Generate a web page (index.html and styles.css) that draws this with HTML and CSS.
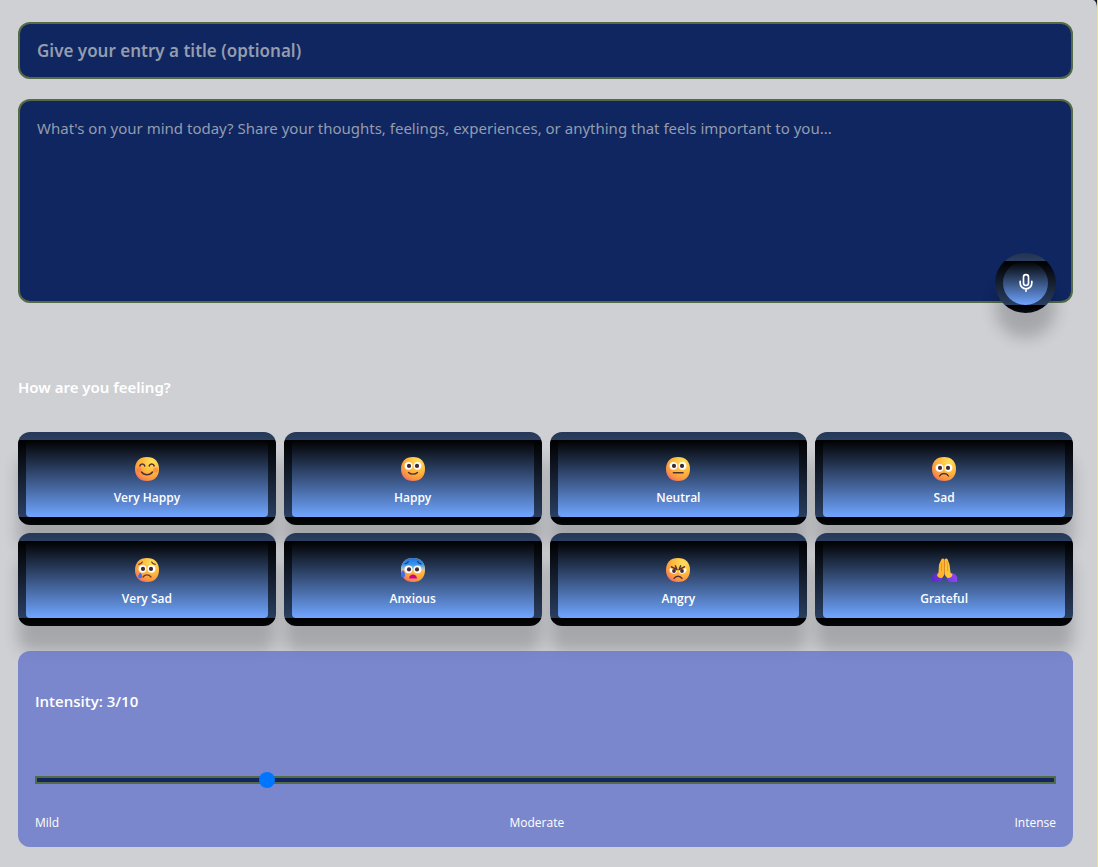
FILE: index.html
```html
<!DOCTYPE html>
<html lang="en">
<head>
<meta charset="utf-8">
<meta name="viewport" content="width=device-width, initial-scale=1">
<title>Journal entry</title>
<link rel="stylesheet" href="styles.css">
</head>
<body>
<svg class="defs" aria-hidden="true">
  <defs>
    <radialGradient id="skin" cx="0.72" cy="0.2" r="0.95">
      <stop offset="0" stop-color="#ffe05a"/><stop offset="0.5" stop-color="#ffb53c"/><stop offset="0.78" stop-color="#fb9440"/><stop offset="1" stop-color="#e8607c"/>
    </radialGradient>
    <linearGradient id="cold" x1="0" y1="0" x2="0" y2="1">
      <stop offset="0" stop-color="#1d72e0"/><stop offset="0.28" stop-color="#3a97ee"/><stop offset="0.48" stop-color="#a9c8e8" stop-opacity="0.8"/><stop offset="0.6" stop-color="#ffc63c" stop-opacity="0"/>
    </linearGradient>
    <linearGradient id="sleeve" x1="0" y1="0" x2="1" y2="0">
      <stop offset="0" stop-color="#5a2bc4"/><stop offset="1" stop-color="#8d45f5"/>
    </linearGradient>
    <symbol id="face" viewBox="0 0 24 24"><path fill="url(#skin)" d="M12 0C19.6 0 24 4.600 24 12s-4.400 12-12 12S0 19.400 0 12 4.400 0 12 0Z"/></symbol>
    <symbol id="eyes" viewBox="0 0 24 24">
      <circle cx="7.500" cy="8.800" r="3.900" fill="#fff"/><circle cx="16.500" cy="8.800" r="3.900" fill="#fff"/>
      <circle cx="8" cy="8.900" r="2.100" fill="#402a32"/><circle cx="16" cy="8.900" r="2.100" fill="#402a32"/>
    </symbol>
  </defs>
</svg>
<main class="page">
  <form class="entry">
    <input class="field title" type="text" aria-label="Entry title" placeholder="Give your entry a title (optional)">
    <div class="note">
      <textarea class="field body" aria-label="Entry text" placeholder="What's on your mind today? Share your thoughts, feelings, experiences, or anything that feels important to you..."></textarea>
      <button class="raised mic" type="button" aria-label="Record voice">
        <svg viewBox="0 0 24 24" fill="none" stroke="#fff" stroke-width="2" stroke-linecap="round" stroke-linejoin="round"><path d="M12 2a3 3 0 0 0-3 3v7a3 3 0 0 0 6 0V5a3 3 0 0 0-3-3Z"/><path d="M19 10v2a7 7 0 0 1-14 0v-2M12 19v3"/></svg>
      </button>
    </div>
    <h2 class="heading">How are you feeling?</h2>
    <div class="moods">
      <button class="raised mood" type="button">
        <svg class="emoji" viewBox="0 0 24 24"><use href="#face"/><circle cx="4" cy="13" r="2.500" fill="#ff6450" opacity=".5"/><circle cx="20.500" cy="13" r="2.500" fill="#ff6450" opacity=".5"/><g fill="none" stroke="#4d303b" stroke-width="1.500" stroke-linecap="round"><path d="M4.800 9c.5-2.600 4.400-2.600 5 0M14.200 9c.5-2.600 4.400-2.600 5 0M6.500 15c2.500 3.500 8.500 3.500 11 0"/></g></svg>
        <span>Very Happy</span>
      </button>
      <button class="raised mood" type="button">
        <svg class="emoji" viewBox="0 0 24 24"><use href="#face"/><use href="#eyes"/><path d="M7.500 15.500c2.300 2.200 6.700 2.200 9 0" fill="none" stroke="#4d303b" stroke-width="1.400" stroke-linecap="round"/></svg>
        <span>Happy</span>
      </button>
      <button class="raised mood" type="button">
        <svg class="emoji" viewBox="0 0 24 24"><use href="#face"/><use href="#eyes"/><path d="M7.500 15.800h9.500" fill="none" stroke="#4d303b" stroke-width="1.600" stroke-linecap="round"/></svg>
        <span>Neutral</span>
      </button>
      <button class="raised mood" type="button">
        <svg class="emoji" viewBox="0 0 24 24"><use href="#face"/><use href="#eyes" y="2"/><path d="M7.500 19c2-3.300 7-3.300 9 0" fill="none" stroke="#4d303b" stroke-width="1.400" stroke-linecap="round"/></svg>
        <span>Sad</span>
      </button>
      <button class="raised mood" type="button">
        <svg class="emoji" viewBox="0 0 24 24"><use href="#face"/><use href="#eyes" y="2"/><g fill="none" stroke="#6b4038" stroke-width="1.300" stroke-linecap="round"><path d="M3.800 6.300c1.800-.3 2.900-1 3.500-2.300M20.200 6.300c-1.800-.3-2.900-1-3.500-2.300M8 19c2-2.800 6-2.800 8 0"/></g><path d="M5.300 14.500c2.700 3.200 1.800 6-.3 6s-3-2.800.3-6Z" fill="#416cf2"/></svg>
        <span>Very Sad</span>
      </button>
      <button class="raised mood" type="button">
        <svg class="emoji" viewBox="0 0 24 24"><use href="#face"/><path fill="url(#cold)" d="M12 0C19.600 0 24 4.600 24 12s-4.400 12-12 12S0 19.400 0 12 4.400 0 12 0Z"/><use href="#eyes" y="2.500"/><path d="M4 5.800c1.800-.2 2.800-.9 3.400-2.200M20 5.800c-1.800-.2-2.800-.9-3.400-2.200" fill="none" stroke="#243c78" stroke-width="1.300" stroke-linecap="round"/><path d="M8 20.500c.3-5.200 7.700-5.200 8 0Z" fill="#d00097"/><path d="M2 12c3 3.500 2.500 7.500 0 7.500S-1 15.500 2 12Z" fill="#416cf2"/></svg>
        <span>Anxious</span>
      </button>
      <button class="raised mood" type="button">
        <svg class="emoji" viewBox="0 0 24 24"><use href="#face"/><path d="M4 10 11.300 13.200a3.900 3.900 0 1 1-7.300-3.200ZM20 10 12.700 13.200a3.900 3.900 0 1 0 7.300-3.200Z" fill="#fff"/><circle cx="8" cy="13" r="1.900" fill="#402a32"/><circle cx="16" cy="13" r="1.900" fill="#402a32"/><g fill="none" stroke="#4d303b" stroke-width="1.400" stroke-linecap="round"><path d="M5.500 8.800 11 11.500M18.500 8.800 13 11.500M9.300 7.800l1.200 2.500M14.700 7.800l-1.200 2.500M8 20.500c1.800-3 6.200-3 8 0"/></g></svg>
        <span>Angry</span>
      </button>
      <button class="raised mood" type="button">
        <svg class="emoji" viewBox="0 0 24 24"><path d="M0 19c1-2.500 3.500-4 6-4l4.500 5.500L8.500 24H0ZM25 19c-1-2.500-3.500-4-6-4l-4.500 5.500 2.500 3.500h8Z" fill="url(#sleeve)"/><path d="M12.400 1.500C11.500-.3 9.400.4 9 2.200L7 6.500l-.5 8L5 17c.5 2 2.500 3.500 4.800 3 1.700-1.200 2.600-3 2.600-5Z" fill="#ffb52e"/><path d="M12.600 1.500c.9-1.800 3-1.100 3.400.7l1.500 4.300 1 8 2 2c-.2 2.500-2.500 4-4.900 3.500-1.800-1.200-3-3-3-5Z" fill="#ffc338"/><path d="M12.500 2v13M15 3l.8 10M9.500 5v8" fill="none" stroke="#e88724" stroke-width=".7"/></svg>
        <span>Grateful</span>
      </button>
    </div>
    <section class="intensity">
      <label class="label" for="intensity">Intensity: 3/10</label>
      <input class="slider" id="intensity" type="range" min="1" max="10" value="3">
      <div class="scale"><span>Mild</span><span>Moderate</span><span>Intense</span></div>
    </section>
  </form>
</main>
</body>
</html>
```
FILE: styles.css
```css
* { box-sizing: border-box; }
body { margin: 0; background: #111827; border-right: 1px solid #ffe83a; color: #fff; font-family: "Noto Sans", "Open Sans", sans-serif; }
.defs { position: absolute; width: 0; height: 0; }
.page { min-height: 100vh; padding: 22px 24px 20px 18px; background: #cfd0d4; border-top-right-radius: 4px 8px; }
.entry { display: flex; flex-direction: column; }
.field { display: block; width: 100%; border: 2px solid #556b46; border-radius: 12px; background: #0f2661; color: #fff; font-family: inherit; outline: none; }
.field::placeholder { color: #949cae; opacity: 1; }
.title { height: 57px; padding: 0 17px; font-size: 17px; font-weight: 600; }
.note { position: relative; margin-top: 20px; }
.body { height: 204px; padding: 15px 17px; font-size: 15px; line-height: 24px; resize: none; }
.raised { border: 8px solid rgba(0, 0, 0, 0.62); background: linear-gradient(#000, #70a5ff); box-shadow: 0 25px 16px rgba(0, 0, 0, 0.2); color: #fff; font-family: inherit; cursor: pointer; }
.mic { position: absolute; right: 17px; bottom: -10px; display: grid; place-items: center; width: 61px; height: 60px; padding: 0; border-radius: 50%; }
.mic svg { width: 20px; height: 20px; }
.heading { margin: 72px 0 33px; font-size: 15px; line-height: 24px; font-weight: 600; }
.moods { display: grid; grid-template-columns: repeat(4, 1fr); gap: 8px; }
.mood { display: flex; flex-direction: column; align-items: center; gap: 8px; padding: 17px 8px 10px; border-radius: 12px; font-family: "Open Sans", "Noto Sans", sans-serif; font-size: 12px; line-height: 18px; font-weight: 600; }
.emoji { width: 24px; height: 24px; overflow: visible; }
.intensity { position: relative; display: flex; flex-direction: column; margin-top: 25px; padding: 38px 17px 15px; border-radius: 12px; background: rgba(101, 116, 201, 0.8); }
.label { font-family: "Open Sans", "Noto Sans", sans-serif; font-size: 15px; line-height: 24px; font-weight: 600; }
.slider { appearance: none; width: 100%; height: 8px; margin: 63px 0 30px; border: 2px solid #556b46; background: #0f2661; }
.slider::-webkit-slider-thumb { appearance: none; width: 16px; height: 16px; border-radius: 50%; background: #0075ff; }
.scale { display: flex; justify-content: space-between; font-family: "Open Sans", "Noto Sans", sans-serif; font-size: 12px; line-height: 18px; }
```
